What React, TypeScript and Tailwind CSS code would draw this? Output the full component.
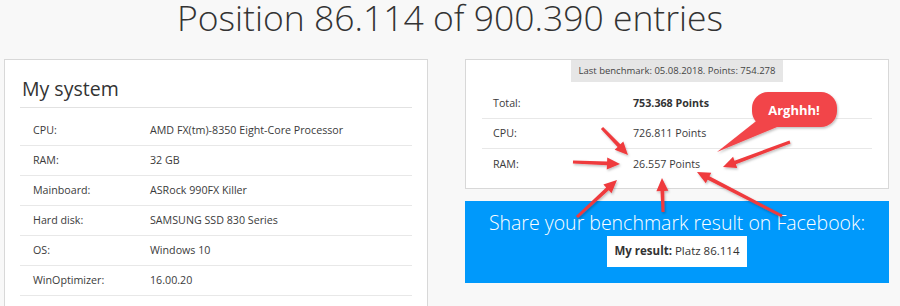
const system = [
  ["CPU:", "AMD FX(tm)-8350 Eight-Core Processor"],
  ["RAM:", "32 GB"],
  ["Mainboard:", "ASRock 990FX Killer"],
  ["Hard disk:", "SAMSUNG SSD 830 Series"],
  ["OS:", "Windows 10"],
  ["WinOptimizer:", "16.00.20"],
];

const scores = [
  ["Total:", "753.368 Points", true],
  ["CPU:", "726.811 Points", false],
  ["RAM:", "26.557 Points", false],
] as const;

// tail -> head
const arrows = [
  [602, 128, 628, 155],
  [573, 162, 620, 164],
  [577, 217, 617, 180],
  [663, 212, 662, 178],
  [782, 216, 697, 172],
  [790, 142, 723, 167],
];

function arrowPoints(x1: number, y1: number, x2: number, y2: number) {
  const dx = x2 - x1;
  const dy = y2 - y1;
  const len = Math.hypot(dx, dy);
  const ux = dx / len;
  const uy = dy / len;
  const nx = -uy;
  const ny = ux;
  const headLen = 13;
  const headW = 6;
  const shaft = 1.9;
  const bx = x2 - ux * headLen;
  const by = y2 - uy * headLen;
  const pts = [
    [x1 + nx * shaft * 0.8, y1 + ny * shaft * 0.8],
    [bx + nx * shaft, by + ny * shaft],
    [bx + nx * headW, by + ny * headW],
    [x2, y2],
    [bx - nx * headW, by - ny * headW],
    [bx - nx * shaft, by - ny * shaft],
    [x1 - nx * shaft * 0.8, y1 - ny * shaft * 0.8],
  ];
  return pts.map((p) => p.join(",")).join(" ");
}

export default function App() {
  return (
    <div className="relative w-[900px] h-[306px] overflow-hidden bg-[#f8f8f8] font-['Open_Sans',sans-serif] text-[#3b3b3b]">
      <h1 className="text-center text-[35.5px] font-light leading-[34px] h-[34px] text-[#333]">
        Position 86.114 of 900.390 entries
      </h1>

      <div className="flex mt-[25px] pl-[4px] gap-[37px]">
        {/* left card */}
        <div className="w-[424px] bg-white border border-[#d8d8d8] px-[15px] pb-[40px]">
          <div className="pt-[19px] pb-[8px] leading-none text-[19.5px] border-b border-[#e2e2e2] pl-[2px] text-[#333]">
            My system
          </div>
          <div className="mt-[8px]">
            {system.map(([label, value]) => (
              <div
                key={label}
                className="h-[30px] flex items-center border-b border-[#e8e8e8] text-[10.7px]"
              >
                <div className="w-[130px] pl-[13px]">{label}</div>
                <div>{value}</div>
              </div>
            ))}
          </div>
        </div>

        {/* right column */}
        <div className="w-[424px] flex flex-col">
          <div className="bg-white border border-[#d8d8d8] pb-[9px]">
            <div className="flex justify-center">
              <div className="h-[22px] px-[8px] bg-[#e6e6e6] flex items-center text-[9.5px] text-[#444]">
                Last benchmark: 05.08.2018. Points: 754.278
              </div>
            </div>
            <div className="mt-[7px] px-[16px]">
              {scores.map(([label, value, bold], i) => (
                <div
                  key={label}
                  className={
                    "h-[30px] flex items-center text-[10.7px] " +
                    (i < 2 ? "border-b border-[#e8e8e8]" : "")
                  }
                >
                  <div className="w-[151px] pl-[11px]">{label}</div>
                  <div className={bold ? "font-bold text-[#333]" : ""}>{value}</div>
                </div>
              ))}
            </div>
          </div>

          <div className="mt-[12px] h-[82px] bg-[#0099fb] flex flex-col items-center pt-[12px]">
            <div className="text-white font-light text-[19.5px] leading-none">
              Share your benchmark result on Facebook:
            </div>
            <div className="mt-[3px] h-[31px] bg-white px-[7px] flex items-center text-[11.5px] text-[#333]">
              <span className="font-bold">My result:</span>&nbsp;Platz 86.114
            </div>
          </div>
        </div>
      </div>

      {/* annotation overlay */}
      <svg
        className="absolute left-0 top-0 pointer-events-none"
        width="900"
        height="306"
        viewBox="0 0 900 306"
      >
        <defs>
          <filter id="sh" x="-20%" y="-20%" width="140%" height="140%">
            <feDropShadow dx="1" dy="1.5" stdDeviation="1.2" floodColor="#000" floodOpacity="0.25" />
          </filter>
        </defs>
        <g fill="#ef3a3e" filter="url(#sh)">
          {arrows.map(([x1, y1, x2, y2], i) => (
            <polygon key={i} points={arrowPoints(x1, y1, x2, y2)} />
          ))}
        </g>
        <g filter="url(#sh)" fill="#f2454a">
          <polygon points="760,118 782,125 717,152" />
          <rect x="752" y="92" width="85" height="35" rx="16" />
        </g>
        <text
          x="794"
          y="114.5"
          textAnchor="middle"
          fill="#fff"
          fontWeight="700"
          fontSize="13"
          fontFamily="'Open Sans', sans-serif"
        >
          Arghhh!
        </text>
      </svg>
    </div>
  );
}
